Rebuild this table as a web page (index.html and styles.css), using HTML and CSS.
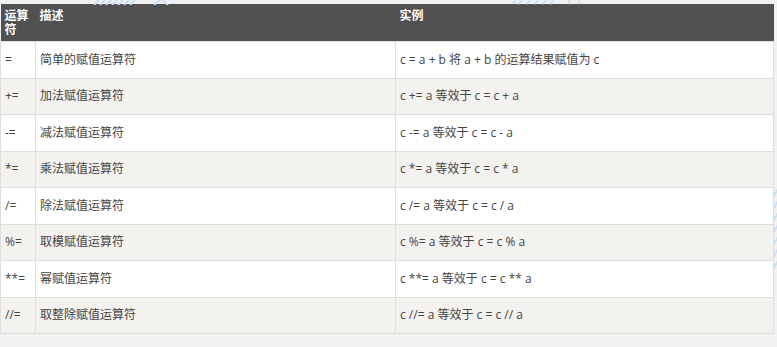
FILE: index.html
```html
<!DOCTYPE html>
<html lang="zh-CN">
<head>
<meta charset="utf-8">
<title>赋值运算符</title>
<link rel="stylesheet" href="styles.css">
</head>
<body>
<div class="page">
  <svg class="wm wm-a" width="90" height="5" viewBox="0 0 90 5" aria-hidden="true">
    <g stroke="#c8ddf6" stroke-width="2">
      <line x1="2" y1="5" x2="7" y2="0"/><line x1="8" y1="5" x2="13" y2="0"/><line x1="14" y1="5" x2="19" y2="0"/>
      <line x1="20" y1="5" x2="25" y2="0"/><line x1="26" y1="5" x2="31" y2="0"/><line x1="32" y1="5" x2="37" y2="0"/>
      <line x1="38" y1="5" x2="43" y2="0"/><line x1="62" y1="5" x2="68" y2="0"/><line x1="70" y1="0" x2="76" y2="5"/>
    </g>
  </svg>
  <svg class="wm wm-b" width="80" height="5" viewBox="0 0 80 5" aria-hidden="true">
    <g stroke="#d0e2f8" stroke-width="2">
      <line x1="2" y1="3" x2="6" y2="1"/><line x1="8" y1="4" x2="13" y2="0"/><line x1="16" y1="4" x2="21" y2="0"/>
      <line x1="24" y1="4" x2="29" y2="0"/><line x1="32" y1="4" x2="37" y2="0"/><line x1="40" y1="4" x2="44" y2="0"/>
      <line x1="58" y1="4" x2="60" y2="0"/><line x1="68" y1="4" x2="70" y2="0"/>
    </g>
  </svg>
  <svg class="wm wm-c" width="5" height="95" viewBox="0 0 5 95" aria-hidden="true">
    <g stroke="#c8ddf6" stroke-width="2">
      <line x1="0" y1="14" x2="5" y2="6"/><line x1="0" y1="26" x2="5" y2="18"/><line x1="0" y1="38" x2="5" y2="30"/>
      <line x1="0" y1="50" x2="5" y2="42"/><line x1="0" y1="62" x2="5" y2="54"/><line x1="0" y1="74" x2="5" y2="66"/>
      <line x1="0" y1="86" x2="5" y2="78"/>
    </g>
  </svg>
  <table class="ops">
    <colgroup>
      <col class="c-op">
      <col class="c-desc">
      <col class="c-ex">
    </colgroup>
    <thead>
      <tr><th>运算符</th><th>描述</th><th>实例</th></tr>
    </thead>
    <tbody>
      <tr><td>=</td><td>简单的赋值运算符</td><td>c = a + b 将 a + b 的运算结果赋值为 c</td></tr>
      <tr><td>+=</td><td>加法赋值运算符</td><td>c += a 等效于 c = c + a</td></tr>
      <tr><td>-=</td><td>减法赋值运算符</td><td>c -= a 等效于 c = c - a</td></tr>
      <tr><td>*=</td><td>乘法赋值运算符</td><td>c *= a 等效于 c = c * a</td></tr>
      <tr><td>/=</td><td>除法赋值运算符</td><td>c /= a 等效于 c = c / a</td></tr>
      <tr><td>%=</td><td>取模赋值运算符</td><td>c %= a 等效于 c = c % a</td></tr>
      <tr><td>**=</td><td>幂赋值运算符</td><td>c **= a 等效于 c = c ** a</td></tr>
      <tr><td>//=</td><td>取整除赋值运算符</td><td>c //= a 等效于 c = c // a</td></tr>
    </tbody>
  </table>
</div>
</body>
</html>
```

FILE: styles.css
```css
html, body {
  margin: 0;
  padding: 0;
  background: #f1f1f1;
}
body {
  font-family: "Open Sans", "Noto Sans CJK SC", sans-serif;
  font-size: 12px;
  color: #444;
}
.page {
  position: relative;
  width: 777px;
  height: 347px;
  padding-top: 4px;
  box-sizing: border-box;
  overflow: hidden;
}
.wm {
  position: absolute;
  display: block;
}
.wm-a { left: 92px; top: 0; }
.wm-b { left: 510px; top: 0; }
.wm-c { left: 773px; top: 183px; }
.ops {
  width: 773px;
  border-collapse: collapse;
  table-layout: fixed;
}
.c-op { width: 35px; }
.c-desc { width: 360px; }
.c-ex { width: 378px; }
.ops th {
  background: #515151;
  color: #fff;
  font-weight: bold;
  text-align: left;
  vertical-align: top;
  padding: 5px 4px 4px;
  line-height: 14px;
  height: 28px;
  border: 0;
}
.ops td {
  background: #fff;
  border: 1px solid #dedede;
  padding: 0 4px;
  height: 35.5px;
  line-height: 18px;
  vertical-align: middle;
  white-space: nowrap;
}
.ops tbody tr:nth-child(even) td {
  background: #f3f2ef;
}
```
